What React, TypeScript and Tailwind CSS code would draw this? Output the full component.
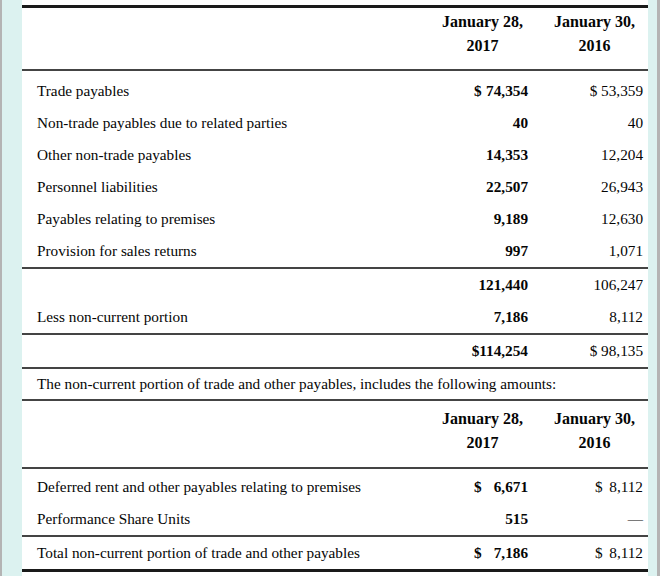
import React from "react";

type Row = { label: string; a: string; b: string };

const rows1: Row[] = [
  { label: "Trade payables", a: "$|74,354", b: "$ 53,359" },
  { label: "Non-trade payables due to related parties", a: "40", b: "40" },
  { label: "Other non-trade payables", a: "14,353", b: "12,204" },
  { label: "Personnel liabilities", a: "22,507", b: "26,943" },
  { label: "Payables relating to premises", a: "9,189", b: "12,630" },
  { label: "Provision for sales returns", a: "997", b: "1,071" },
];

function Val({ v, wide }: { v: string; wide: boolean }) {
  if (v.includes("|")) {
    const [d, n] = v.split("|");
    return (
      <span className={`inline-flex justify-between ${wide ? "w-[54px]" : "w-[48px]"}`}>
        <span>{d}</span>
        <span>{n}</span>
      </span>
    );
  }
  return <>{v}</>;
}

function DataRow({ label, a, b }: Row) {
  return (
    <div className="grid grid-cols-[1fr_120px_114px] items-center h-[32px]">
      <div className="pl-[15px] whitespace-nowrap">{label}</div>
      <div className="text-right font-bold whitespace-pre pr-[6px]">
        <Val v={a} wide />
      </div>
      <div className="text-right whitespace-pre pr-[5px]">
        <Val v={b} wide={false} />
      </div>
    </div>
  );
}

function Header({ pt, pb }: { pt: string; pb: string }) {
  return (
    <div className={`grid grid-cols-[1fr_120px_114px] font-bold text-[16px] leading-[24px] ${pt} ${pb}`}>
      <div />
      <div className="flex justify-end pr-[11px]">
        <div className="text-center">
          January 28,
          <br />
          2017
        </div>
      </div>
      <div className="flex justify-end pr-[13px]">
        <div className="text-center">
          January 30,
          <br />
          2016
        </div>
      </div>
    </div>
  );
}

const Rule = ({ thick }: { thick?: boolean }) => (
  <div className={thick ? "h-[3px] bg-[#1a1a1a]" : "h-[2px] bg-[#444444]"} />
);

export default function App() {
  return (
    <div className="w-[660px] h-[576px] flex bg-[#dcf2f0] overflow-hidden">
      <div className="w-[2px] bg-[#b4b4b4]" />
      <div className="w-[20px]" />
      <div
        className="w-[626px] bg-white text-[15.25px] text-[#050505] pt-[5px]"
        style={{ fontFamily: '"Liberation Serif", "Times New Roman", serif' }}
      >
        <Rule thick />
        <Header pt="pt-[2px]" pb="pb-[11px]" />
        <Rule />
        <div className="h-[4px]" />
        {rows1.map((r) => (
          <DataRow key={r.label} {...r} />
        ))}
        <Rule />
        <DataRow label="" a="121,440" b="106,247" />
        <DataRow label="Less non-current portion" a="7,186" b="8,112" />
        <Rule />
        <DataRow label="" a="$114,254" b="$ 98,135" />
        <Rule />
        <div className="h-[30px] flex items-center pl-[15px] whitespace-nowrap">
          The non-current portion of trade and other payables, includes the following amounts:
        </div>
        <Rule />
        <Header pt="pt-[6px]" pb="pb-[12px]" />
        <Rule />
        <div className="h-[2px]" />
        <DataRow label="Deferred rent and other payables relating to premises" a="$|6,671" b="$|8,112" />
        <DataRow label="Performance Share Units" a="515" b="—" />
        <Rule />
        <DataRow label="Total non-current portion of trade and other payables" a="$|7,186" b="$|8,112" />
        <Rule thick />
      </div>
      <div className="w-[9px]" />
      <div className="w-[3px] bg-[#b4b4b4]" />
    </div>
  );
}
